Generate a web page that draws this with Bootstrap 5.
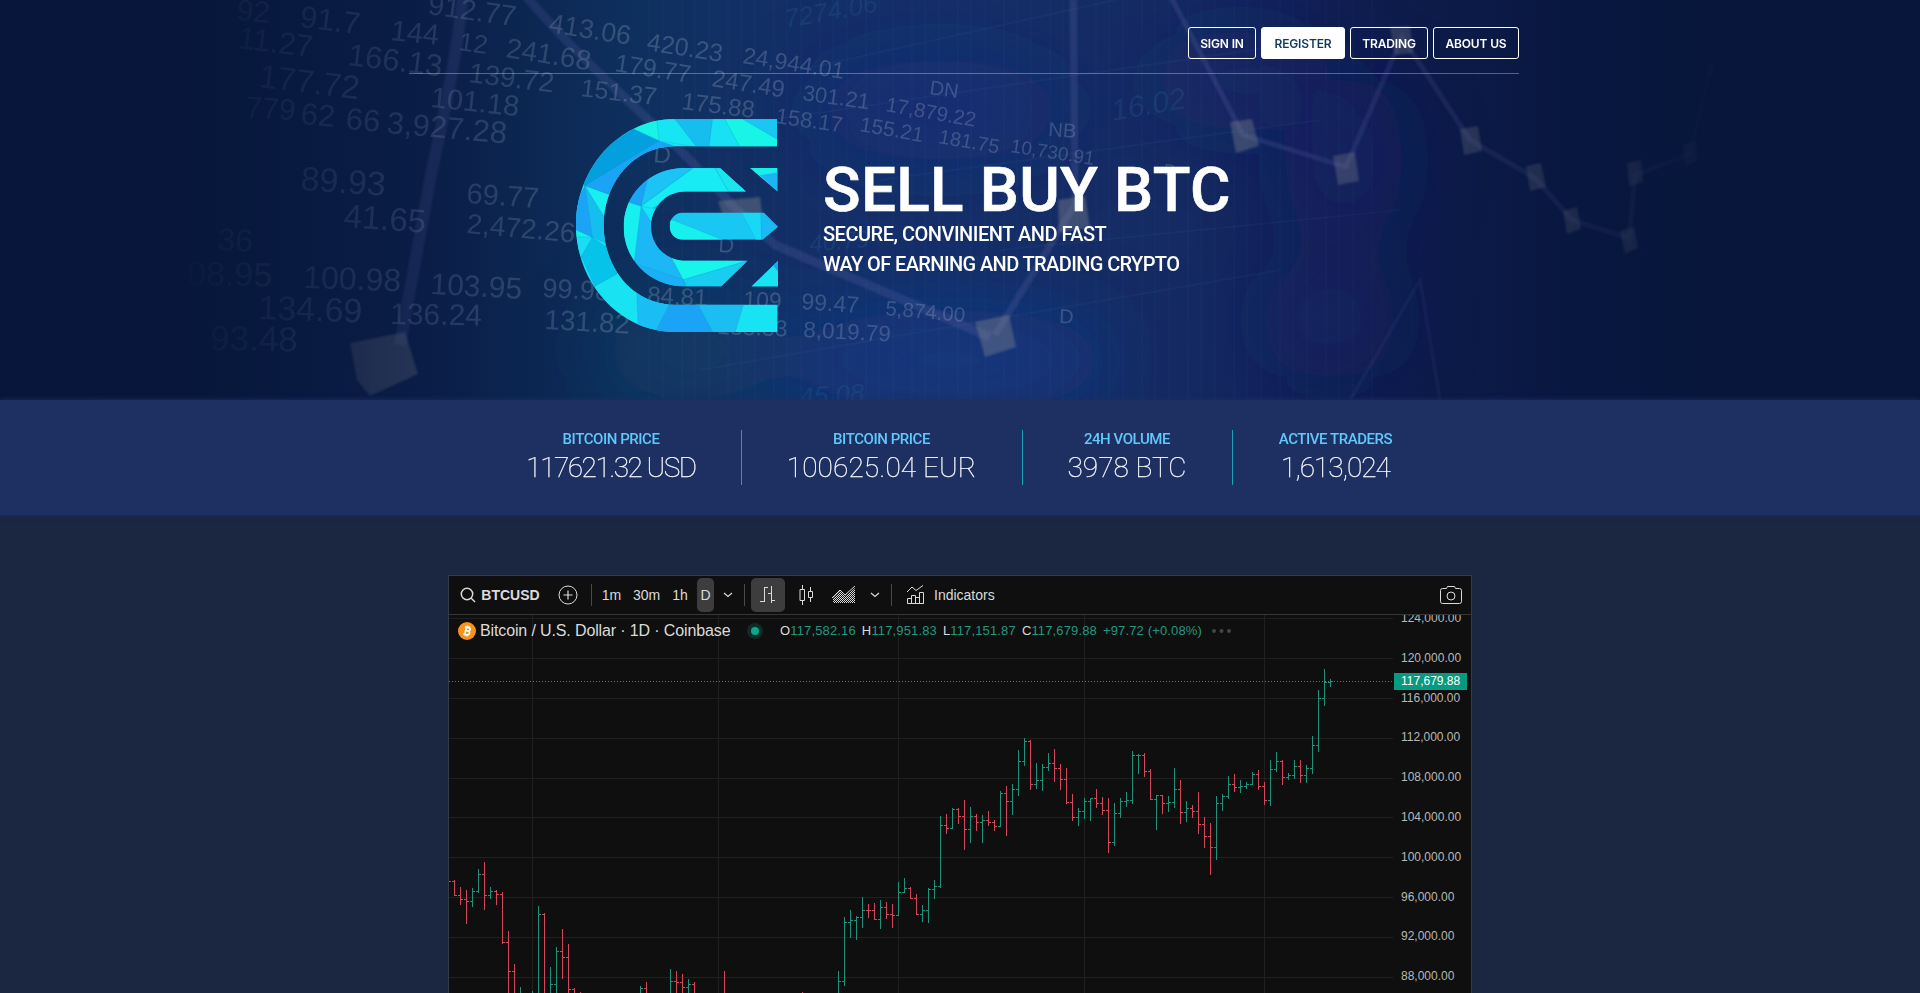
<!DOCTYPE html>
<html lang="en">
<head>
<meta charset="utf-8">
<meta name="viewport" content="width=device-width, initial-scale=1">
<title>Sell Buy BTC</title>
<link href="https://cdn.jsdelivr.net/npm/bootstrap@5.3.0/dist/css/bootstrap.min.css" rel="stylesheet">
<style>
html,body{height:993px;overflow:hidden}
body{background:#1b2641;font-family:Roboto,sans-serif;color:#fff}
.hero{height:400px;background:#07153a}
.hero-art{inset:0;width:100%;height:400px}
.page-col{width:1110px}
.topnav{height:74px;padding-top:27px;border-bottom:1px solid #ffffff50;gap:5px}
.topnav .btn{height:32px;padding:0;font:600 12px/31px Inter,sans-serif;letter-spacing:-.15px;border:1px solid #fff;border-radius:3px;color:#fff}
.topnav .btn.on{background:#fff;color:#12395c}
.b1{width:68px}.b2{width:84px}.b3{width:78px}.b4{width:86px}
.brand{padding:45px 0 0 167px}
.brand-text{margin-left:45px;padding-top:35px}
.brand h1{font-size:62px;font-weight:500;line-height:72px;margin:0;letter-spacing:.35px;white-space:nowrap;-webkit-text-stroke:.6px #fff}
.brand p{font-size:20px;font-weight:500;line-height:30px;margin:0;white-space:nowrap;position:relative;top:-7px}
.s1{letter-spacing:-.49px}.s2{letter-spacing:-.61px}
.stats{height:115px;background:#1e2f62;box-shadow:0 0 5px #1e2f62;padding-top:30px}
.stat{height:55px;text-align:center;border-right:1px solid #19a2b8;white-space:nowrap}
.stat:last-child{border:0}
.stat b{display:block;font-size:15px;font-weight:500;line-height:19px;color:#5fc9fb;letter-spacing:-.45px}
.stat span{display:block;font-size:28px;font-weight:100;line-height:34px;margin-top:2px;color:#fff;-webkit-text-stroke:.25px #fff}
.v1{letter-spacing:-1.5px}.v2{letter-spacing:.1px}.v3{letter-spacing:0}.v4{letter-spacing:-1px}
.w1{width:260px}.w2{width:281px}.w3{width:210px}.w4{width:206px}
.widget{width:1024px;height:430px;margin:60px auto 0;background:#0f0f0f;border:1px solid #343b41;border-bottom:0;font-family:"Liberation Sans",sans-serif;color:#dbdbdb}
.tools{height:39px;border-bottom:1px solid #363636;display:grid;grid-template-columns:96px 45px 3px 37px 33px 34px 17px 27px 6px 4px 34px 42px 33px 29px 4px 41px 1fr 30px;align-items:center;justify-items:center;font-size:14px}
.tools svg{fill:none;stroke:#dbdbdb;display:block}
.tools .sep{width:1px;height:22px;background:#4a4a4a}
.symbol{gap:5px;padding-left:6px}
.pick{background:#3d3d3d;border-radius:5px;height:34px;width:100%;display:flex;align-items:center;justify-content:center}
.legend{left:0;top:0;height:32px;padding-left:9px;white-space:nowrap;font-size:13px}
.legend i{font-style:normal;color:#22987f}
.pair{font-size:16px;letter-spacing:-.13px;margin-left:4px;width:267px}
.ohlc{margin-left:17px;gap:6px;letter-spacing:.145px}
.plot text{font:12px "Liberation Sans",sans-serif;fill:#b8b8b8}
</style>
</head>
<body>
<header class="hero position-relative overflow-hidden">
<svg class="hero-art position-absolute" viewBox="0 0 1920 400" aria-hidden="true">
<defs>
<linearGradient id="base" x1="0" x2="1"><stop offset="0" stop-color="#07163a"/><stop offset=".1" stop-color="#07173b"/><stop offset=".22" stop-color="#0a1d46"/><stop offset=".33" stop-color="#0e305e"/><stop offset=".42" stop-color="#142f68"/><stop offset=".5" stop-color="#153069"/><stop offset=".62" stop-color="#152a62"/><stop offset=".7" stop-color="#101e50"/><stop offset=".82" stop-color="#08173f"/><stop offset=".9" stop-color="#07163a"/><stop offset="1" stop-color="#07163a"/></linearGradient>
<linearGradient id="fadeg" x1="0" x2="1"><stop offset=".08" stop-color="#000"/><stop offset=".15" stop-color="#444"/><stop offset=".22" stop-color="#999"/><stop offset=".34" stop-color="#fff"/><stop offset=".63" stop-color="#fff"/><stop offset=".76" stop-color="#aaa"/><stop offset=".85" stop-color="#555"/><stop offset=".9" stop-color="#000"/></linearGradient>
<mask id="fade"><rect width="1920" height="400" fill="url(#fadeg)"/></mask>
<filter id="soft" x="-100%" y="-100%" width="300%" height="300%"><feGaussianBlur stdDeviation="40"/></filter>
<filter id="edge"><feGaussianBlur stdDeviation="1"/></filter>
<filter id="ink"><feGaussianBlur stdDeviation=".6"/></filter>
<pattern id="rain" width="46" height="400" patternUnits="userSpaceOnUse"><path d="M5 0V400M19 0V400M38 0V400" stroke="#3e86c8" stroke-opacity=".07"/></pattern>
</defs>
<rect width="1920" height="400" fill="url(#base)"/>
<g filter="url(#soft)"><ellipse cx="940" cy="110" rx="130" ry="50" fill="#1c2f80" opacity=".45"/><ellipse cx="950" cy="360" rx="170" ry="50" fill="#193b8e" opacity=".6"/><ellipse cx="1345" cy="160" rx="60" ry="80" fill="#1c2272" opacity=".5"/><ellipse cx="1330" cy="320" rx="70" ry="60" fill="#1b2475" opacity=".4"/><ellipse cx="690" cy="350" rx="90" ry="50" fill="#0e4567" opacity=".5"/><ellipse cx="1240" cy="80" rx="90" ry="50" fill="#1a2474" opacity=".4"/></g>
<g mask="url(#fade)">
<rect x="640" width="740" height="400" fill="url(#rain)"/>
<path d="M800 70L1250 -30M700 130L1320 40M880 180L1320 120M700 370L1280 270M1000 250L1400 210" stroke="#4388cc" stroke-opacity=".07" stroke-width="2"/>
<g fill="none" stroke="#5960a4" stroke-opacity=".27" filter="url(#edge)">
<path d="M463 -4C455 70 440 130 430 180L400 345" stroke-width="12"/><path d="M525 -5C580 60 640 110 685 155L735 208L775 245L990 337" stroke-width="9"/><path d="M995 335L1075 205L1073 -5" stroke-width="7"/><path d="M1170 -5L1243 135L1346 167L1402 37L1470 140L1535 178L1572 220L1629 238L1635 175L1690 154L1711 68" stroke-width="5"/><path d="M1350 400L1420 280L1440 400" stroke-width="3" stroke-opacity=".18"/></g>
<g fill="#929494" fill-opacity=".34" filter="url(#edge)"><path d="M350 343L405 332L418 374L370 396L357 380Z"/><path d="M718 201L760 197L764 228L728 232Z"/><path d="M1058 200L1085 196L1090 228L1059 232Z"/><path d="M975 322L1009 315L1016 347L985 357Z"/><path d="M1230 122L1252 119L1259 146L1236 153Z"/><path d="M1333 156L1355 152L1359 181L1338 185Z"/><path d="M1390 27L1410 26L1413 53L1395 55Z"/><path d="M1460 129L1478 126L1482 151L1464 155Z"/><path d="M1526 166L1541 163L1546 187L1530 191Z"/><path d="M1563 211L1577 207L1581 229L1567 234Z"/><path d="M1620 231L1634 227L1638 248L1625 254Z"/><path d="M1627 163L1641 160L1643 182L1629 186Z"/><path d="M1683 145L1696 141L1698 161L1685 166Z"/><path d="M1707 62L1714 63L1715 76L1708 76Z"/></g>
<g id="digits" font-family="Liberation Sans,sans-serif" fill="#b5c4d6" fill-opacity=".25" filter="url(#ink)"></g>
</g>
</svg>
<div class="page-col mx-auto position-relative" style="left:4px">
<nav class="topnav d-flex justify-content-end"><a class="btn b1">SIGN IN</a><a class="btn b2 on">REGISTER</a><a class="btn b3">TRADING</a><a class="btn b4">ABOUT US</a></nav>
<div class="brand d-flex">
<svg width="202" height="213" viewBox="48 42 606 640" preserveAspectRatio="none" class="flex-shrink-0">
<defs><clipPath id="ring"><path d="M651 42H345C178 42 48 190 48 362S178 682 345 682H653V600H345C220 600 131 490 131 362S220 124 345 124H651Z"/></clipPath>
<clipPath id="mid"><path d="M480 189L558 260H375C320 260 273 305 273 364S320 468 375 468H563L483 545H375C270 545 191 465 191 366S270 189 375 189Z"/></clipPath>
<clipPath id="core"><path d="M370 323H611L654 366 608 405H370C347 405 329 387 329 364S347 323 370 323Z"/></clipPath></defs>
<g stroke="#0b80b8" stroke-opacity=".45" stroke-width="1">
<g clip-path="url(#ring)"><rect x="40" y="40" width="620" height="650" fill="#18e3f3"/>
<path fill="#18f3e6" d="M220 72L290 30L298 108Z"/><path fill="#049fdf" d="M220 72L298 108 75 243 20 200Z"/><path fill="#1ba4f5" d="M75 243L298 108 350 126 250 200 150 270Z"/><path fill="#18e5f3" d="M290 42H345L410 126 298 108Z"/><path fill="#16bef0" d="M345 42H458L447 126H410Z"/><path fill="#18e0f5" d="M458 42H494L540 126H447Z"/><path fill="#18f5e6" d="M494 42H548L653 103V126H540Z"/><path fill="#18c8f3" d="M548 42H653V103Z"/><path fill="#18f0f0" d="M75 243L150 270 131 335Z"/><path fill="#16bef0" d="M75 243L131 335 140 415 97 398Z"/><path fill="#1ba4f5" d="M75 243L97 398 40 372V300Z"/><path fill="#18f0f0" d="M40 372L97 398 40 396Z"/><path fill="#18ddf3" d="M40 396L97 398 64 460Z"/><path fill="#06c3ea" d="M97 398L160 440 172 507 104 545 64 455Z"/><path fill="#1bbdf5" d="M230 565L328 600 285 685H235Z"/><path fill="#1ba4f5" d="M328 600H415L460 685H285Z"/><path fill="#1bbdf3" d="M415 600H550L525 685H460Z"/></g>
<g clip-path="url(#mid)"><rect x="180" y="180" width="400" height="380" fill="#1bb8f5"/><path fill="#1ba4f5" d="M265 215L195 290 243 304Z"/><path fill="#1bc4f5" d="M265 215L300 180H410L243 304Z"/><path fill="#18ebf3" d="M400 189H465L507 262H375L273 312 243 304Z"/><path fill="#18e5ec" d="M465 189H482L562 262H507Z"/><path fill="#18f0f0" d="M200 290L243 304 222 475 180 400Z"/><path fill="#18e5f3" d="M243 304L290 312 273 350Z"/><path fill="#1bb0f5" d="M222 475L370 525 380 550H300Z"/><path fill="#18f5ea" d="M335 460L563 468 370 525Z"/><path fill="#18cdf0" d="M370 525L563 468 483 548H380Z"/></g>
<g clip-path="url(#core)"><rect x="320" y="320" width="340" height="90" fill="#18c8f3"/><path fill="#18f0ee" d="M325 340L490 406H325Z"/><path fill="#18d8f5" d="M545 323H603L605 406H588Z"/><path fill="#1bbaf3" d="M603 323L654 366 605 406Z"/></g></g>
<path fill="#18f0e6" d="M570 189H652V259Z"/><path fill="#1bb4f5" d="M600 211L652 203V259Z"/><path fill="#18e3f3" d="M654 468V545H574Z"/><path fill="#1ba4f5" d="M654 468V500L640 484Z"/>
</svg>
<div class="brand-text"><h1>SELL BUY BTC</h1><p class="s1">SECURE, CONVINIENT AND FAST</p><p class="s2">WAY OF EARNING AND TRADING CRYPTO</p></div>
</div></div>
</header>
<section class="stats position-relative d-flex justify-content-center">
<div class="stat w1"><b>BITCOIN PRICE</b><span class="v1">117621.32 USD</span></div>
<div class="stat w2"><b>BITCOIN PRICE</b><span class="v2">100625.04 EUR</span></div>
<div class="stat w3"><b>24H VOLUME</b><span class="v3">3978 BTC</span></div>
<div class="stat w4"><b>ACTIVE TRADERS</b><span class="v4">1,613,024</span></div>
</section>
<main class="widget">
<div class="tools">
<div class="symbol d-flex align-items-center"><svg width="16" height="16" stroke-width="1.5"><circle cx="7" cy="7" r="5.7"/><path d="M11 11L15 15"/></svg><strong>BTCUSD</strong></div>
<svg width="20" height="20"><circle cx="10" cy="10" r="9"/><path d="M5.5 10H14.5M10 5.5V14.5" stroke-width="1.2"/></svg>
<span class="sep"></span><span>1m</span><span>30m</span><span>1h</span><span class="pick">D</span>
<svg width="10" height="6"><path d="M1 1L5 4.5 9 1" stroke-width="1.2"/></svg>
<span class="sep"></span><span></span>
<span class="pick"><svg width="16" height="18"><path d="M0 15.500H4.500M4.500 1V16M4.500 1.500H7.500M8 7.500H11.500M11.500 0V17M11.500 14.500H15" shape-rendering="crispEdges"/></svg></span>
<svg width="14" height="20"><path d="M3.500 0V4M3.500 16V20M1 4.500H5.500V15.500H1ZM11.500 2V6M11.500 13V17M9.500 6.500H13.500V12.500H9.500Z"/></svg>
<svg width="24" height="18"><defs><pattern id="hatch" width="2" height="2" patternUnits="userSpaceOnUse"><path d="M0 0h1v1H0zM1 1h1v1H1z" fill="#dbdbdb" stroke="none"/></pattern></defs><path d="M1 12L8 5 13 10 23 2V17H1Z" fill="url(#hatch)" stroke="none"/><path d="M0 12L8 4 13 9 23 0"/></svg>
<svg width="10" height="6"><path d="M1 1L5 4.500 9 1" stroke-width="1.200"/></svg>
<span class="sep"></span>
<svg width="18" height="20" style="margin-left:4px"><path d="M.500 18.500V13.500H4.500V18.500ZM4.500 18.500V10.500H8.500V18.500M8.500 12.500H12.500M12.500 18.500V7.500H16.500V18.500ZM4.500 18.500H16.500M0 7L5 2 9 5.500 16 .500"/></svg>
<span class="me-auto">Indicators</span>
<svg width="22" height="18" class="me-auto" style="margin-left:-1px"><path d="M2.500 2.500H6.500L7.500 .500H14.500L15.500 2.500H19.500Q21.500 2.500 21.500 4.500V15.500Q21.500 17.500 19.500 17.500H2.500Q.500 17.500 .500 15.500V4.500Q.500 2.500 2.500 2.500Z"/><circle cx="11" cy="10" r="4"/></svg>
</div>
<div class="position-relative">
<svg class="plot d-block" width="1022" height="378" viewBox="449 615 1022 378" shape-rendering="crispEdges">
<path stroke="#202020" d="M449 618.500H1393M449 658.500H1393M449 698.500H1393M449 738.500H1393M449 778.500H1393M449 817.500H1393M449 857.500H1393M449 897.500H1393M449 937.500H1393M449 977.500H1393M532.500 615V993M718.500 615V993M898.500 615V993M1084.500 615V993M1264.500 615V993"/>
<path d="M449 681.500H1393" stroke="#22987f" stroke-dasharray="1 2"/>
<g id="bars" fill="none"></g>
<g id="prices"></g>
<rect x="1394" y="673" width="73" height="17" rx="1" fill="#089981"/>
<text x="1401" y="685" style="fill:#fff">117,679.88</text>
</svg>
<div class="legend position-absolute d-flex align-items-center">
<svg width="18" height="18" viewBox="0 0 18 18"><circle cx="9" cy="9" r="9" fill="#f7931a"/><g transform="rotate(13 9 9)" fill="none" stroke="#fff" stroke-width="1.600"><path d="M6 5.300H10Q12 5.300 11.700 7.200Q11.500 8.800 9.500 8.800H7.500M9.500 8.800Q12.300 8.900 12 10.900Q11.800 12.700 9.500 12.700H6M7.500 5V13"/><path d="M8.200 3.500V5M10 3.500V5M8.200 13V14.500M10 13V14.500" stroke-width="1"/></g></svg>
<span class="pair">Bitcoin / U.S. Dollar · 1D · Coinbase</span>
<svg width="16" height="16"><circle cx="8" cy="8" r="8" fill="#0d2b27"/><circle cx="8" cy="8" r="4" fill="#0ba78c"/></svg>
<span class="ohlc d-flex"><span>O<i>117,582.16</i></span><span>H<i>117,951.83</i></span><span>L<i>117,151.87</i></span><span>C<i>117,679.88</i></span><i>+97.72 (+0.08%)</i></span>
<svg width="20" height="4" style="margin-left:10px" fill="#464646"><circle cx="2" cy="2" r="2"/><circle cx="9.500" cy="2" r="2"/><circle cx="17" cy="2" r="2"/></svg>
</div></div>
</main>
<script src="https://cdn.jsdelivr.net/npm/bootstrap@5.3.0/dist/js/bootstrap.bundle.min.js"></script>
<script>
// Decorative ticker figures: text, x, baseline y, size, rotation
const digits = [["92",236,20,30,5],["91.7",299,27,31,7],["912.77",427,14,29,8],["413.06",548,32,27,9],["420.23",646,50,25,9],["24,944.01",742,63,23,9],
["11.27",237,48,31,7],["144",390,40,29,6],["12",458,50,26,8],["241.68",505,57,28,9],["179.77",614,71,25,9],["247.49",711,86,24,9],["301.21",802,100,22,8],["17,879.22",885,111,20.5,10],["DN",929,94,20,8],
["166.13",347,65,31,7],["139.72",468,82,28,7],["151.37",580,96,25,7],["175.88",681,109,24,7],["158.17",775,123,22,8],["155.21",859,131,21,10],["181.75",938,143,20,10],["10,730.91",1010,152,19,9],["NB",1048,136,20,4],
["177.72",258,87,33,7],["101.18",430,107,29,6],["779",245,117,30,4],["62",300,124,31,5],["66",345,129,31,5],["3,927.28",386,133,31,5],
["89.93",300,190,34,4],["69.77",466,203,29,4],["41.65",343,227,33,4],["2,472.26",466,233,28,5],["36",217,250,32,3],["08.95",187,285,34,1],["100.98",303,288,32,2],["103.95",430,294,30,3],["99.98",542,297,27,3],["84.81",647,303,24,3],["109",743,307,23,3],["99.47",801,309,23,4],["5,874.00",885,315,20.500,5],
["134.69",258,319,34,2],["136.24",390,324,30,1],["131.82",544,329,28,3],["133.33",717,334,23,2],["8,019.79",803,337,22.500,3],["93.48",210,350,35,1],["D",653,162,24,5],["D",718,252,22,3],["D",1059,323,20,2],["D",1164,175,16,2]];
const teal = [["16.02",1113,121,30,-10],["7274.06",786,28,26,-10],["40.79",810,252,24,-5],["45.08",800,406,26,-4]];
const cell = (f) => ([t,x,y,s,r]) => `<text x="${x}" y="${y}" font-size="${s}" transform="rotate(${r} ${x} ${y})"${f}>${t}</text>`;
document.getElementById("digits").innerHTML = digits.map(cell("")).join("") + teal.map(cell(' fill="#3aa0c8" fill-opacity=".13" font-style="italic"')).join("");

// Daily bars: slot, direction (1 up, 0 down), high, low, close, in thirds of a pixel under `base`
const sets = [
[840,[[1,0,120,167,166],[2,0,141,195,178],[3,0,150,251,184],[4,1,144,200,154],[5,1,87,158,103],[6,0,66,209,166],[7,1,141,177,154],[8,0,150,195,163],[9,0,156,311,307],[10,0,273,470,394],[11,0,372,470,500],[12,1,441,470,500],[14,1,453,470,500],[15,1,198,470,223],[16,0,219,470,500],[17,1,381,470,433],[18,1,321,470,334],[19,0,267,417,352],[20,0,312,470,448],[21,0,444,470,500],[22,0,456,470,500],[32,1,438,470,445],[33,0,426,470,500],[37,1,387,470,424],[38,0,393,470,427],[39,0,402,470,442],[40,1,417,470,433],[41,0,426,470,500],[46,0,393,470,500],[59,0,456,470,500],[65,1,393,470,424],[66,1,231,437,247],[67,1,210,293,241],[68,1,228,299,232],[69,1,171,264,211],[70,0,192,234,211],[71,0,189,239,238],[72,1,180,266,202],[73,0,186,236,223],[74,0,192,264,226],[75,1,126,227,157],[76,1,114,158,145],[77,0,141,176,175],[78,0,162,224,223],[79,1,195,246,211],[80,1,144,248,148],[81,1,120,177,139]]],
[720,[[82,1,288,504,316],[83,0,281,342,325],[84,1,264,326,268],[85,0,264,311,290],[86,0,240,389,328],[87,1,261,368,290],[88,0,281,333,307],[89,1,285,368,301],[90,0,273,318,307],[91,0,300,332,319],[92,1,213,318,220],[93,0,198,347,244],[94,1,192,285,208],[95,1,90,227,124],[96,1,54,137,64],[97,0,60,209,193],[98,1,129,206,181],[99,1,132,212,142],[100,1,99,152,130],[101,0,87,185,145],[102,0,132,209,178],[103,0,144,251,247],[104,0,222,302,292],[105,1,264,318,274],[106,1,234,296,244],[107,1,234,302,235],[108,0,207,263,250],[109,0,231,285,271],[110,0,234,398,367],[111,1,249,377,280],[112,1,234,293,244],[113,1,216,261,241],[114,1,93,251,106],[115,1,102,161,106],[116,0,99,170,154],[117,0,147,240,239]]],
[640,[[118,1,465,570,467],[119,0,465,521,490],[120,1,468,515,487],[121,1,384,503,448],[122,0,420,551,517],[123,1,483,545,505],[124,0,495,533,514],[125,0,456,581,553],[126,0,531,623,589],[127,0,549,704,622],[128,1,468,660,490],[129,1,462,512,469],[130,1,408,476,433],[131,0,402,455,442],[132,1,420,458,439],[133,1,426,446,433],[134,1,396,434,403],[135,0,390,449,439],[136,0,426,494,481],[137,1,360,497,388],[138,1,336,395,364],[139,0,360,434,412],[140,1,399,419,406],[141,1,360,416,379],[142,0,360,429,406],[143,1,375,428,385],[144,1,288,402,316],[145,1,150,335,175],[146,1,87,197,127],[147,1,117,140,125]]]];
let prev = 881.5, paths = ["", "M449 881.500H451"];
for (const [base, rows] of sets) for (const [i, up, h, l, c] of rows) {
  const x = 448 + i * 6 + .5, close = Math.floor(base + c / 3) + .5;
  paths[up] += `M${x} ${Math.round(base + h / 3)}V${Math.round(base + l / 3)}M${x - 2.5} ${prev}H${x}M${x} ${close}H${x + 2.5}`;
  prev = close;
}
document.getElementById("bars").innerHTML = `<path d="${paths[0]}" stroke="#d0485a"/><path d="${paths[1]}" stroke="#22917b"/>`;
document.getElementById("prices").innerHTML = [[124,622],[120,662],[116,702],[112,741],[108,781],[104,821],[100,861],[96,901],[92,940],[88,980]].map(([p,y]) => `<text x="1401" y="${y}">${p},000.00</text>`).join("");
</script>
</body>
</html>
